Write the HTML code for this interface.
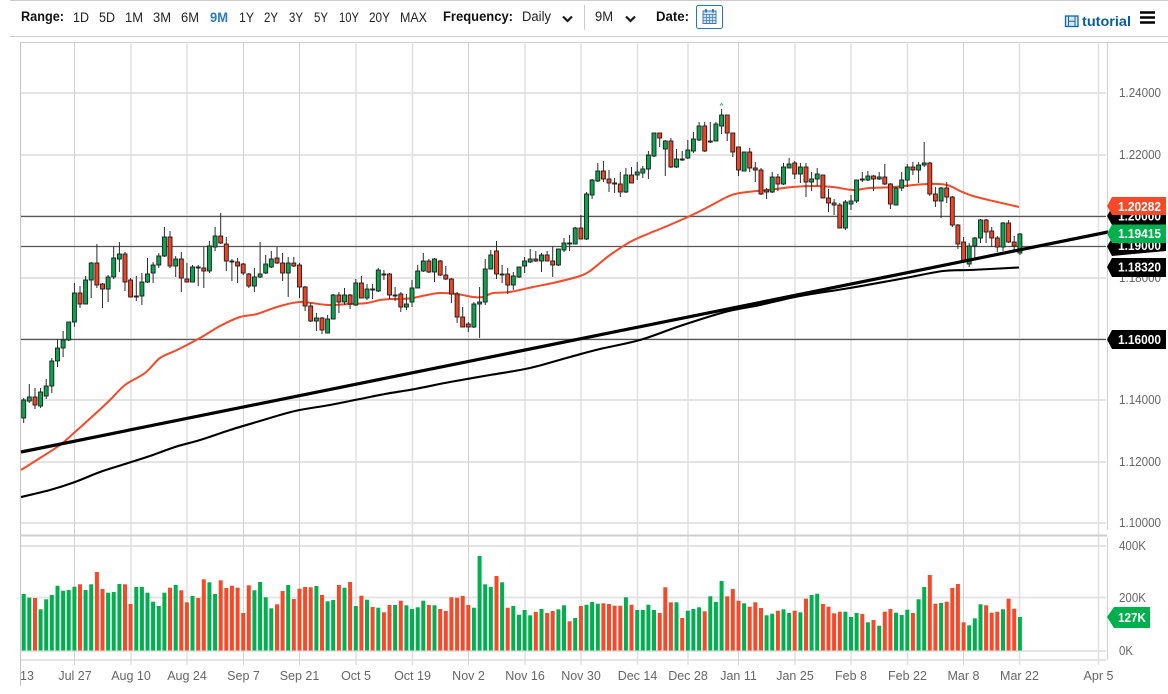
<!DOCTYPE html>
<html><head><meta charset="utf-8"><title>Chart</title>
<style>
html,body{margin:0;padding:0;background:#fff;width:1168px;height:694px;overflow:hidden}
svg{display:block}
text{font-family:"Liberation Sans",sans-serif}
.tb{font-size:13.5px;fill:#222}
.b{font-weight:bold;fill:#111}
.ax{font-size:12.5px;fill:#666}
.tag{font-size:12.5px;font-weight:bold;fill:#fff}
</style></head><body>
<svg xmlns="http://www.w3.org/2000/svg" width="1168" height="694" viewBox="0 0 1168 694">
<rect width="1168" height="694" fill="#fff"/>
<!-- toolbar -->
<path d="M10 .5H1168M10 36.5H1168M20 42.5H1168" stroke="#ccc" fill="none"/>
<text x="21" y="21" class="tb b" textLength="43" lengthAdjust="spacingAndGlyphs">Range:</text>
<text x="73" y="22" class="tb" textLength="16" lengthAdjust="spacingAndGlyphs">1D</text>
<text x="99" y="22" class="tb" textLength="16" lengthAdjust="spacingAndGlyphs">5D</text>
<text x="125" y="22" class="tb" textLength="18" lengthAdjust="spacingAndGlyphs">1M</text>
<text x="153" y="22" class="tb" textLength="18" lengthAdjust="spacingAndGlyphs">3M</text>
<text x="181" y="22" class="tb" textLength="18" lengthAdjust="spacingAndGlyphs">6M</text>
<text x="210" y="22" class="tb" style="font-weight:bold;fill:#2a7ac6" textLength="18" lengthAdjust="spacingAndGlyphs">9M</text>
<text x="239" y="22" class="tb" textLength="15" lengthAdjust="spacingAndGlyphs">1Y</text>
<text x="264" y="22" class="tb" textLength="14" lengthAdjust="spacingAndGlyphs">2Y</text>
<text x="289" y="22" class="tb" textLength="14" lengthAdjust="spacingAndGlyphs">3Y</text>
<text x="314" y="22" class="tb" textLength="14" lengthAdjust="spacingAndGlyphs">5Y</text>
<text x="339" y="22" class="tb" textLength="20" lengthAdjust="spacingAndGlyphs">10Y</text>
<text x="369" y="22" class="tb" textLength="21" lengthAdjust="spacingAndGlyphs">20Y</text>
<text x="400" y="22" class="tb" textLength="27" lengthAdjust="spacingAndGlyphs">MAX</text>
<text x="443" y="21" class="tb b" textLength="70" lengthAdjust="spacingAndGlyphs">Frequency:</text>
<text x="522" y="21" class="tb" textLength="29" lengthAdjust="spacingAndGlyphs">Daily</text>
<path d="M563 16.500l4.500 4.500 4.500-4.500M626 16.500l4.500 4.500 4.500-4.500" fill="none" stroke="#1a1a1a" stroke-width="2.200"/>
<path d="M584.500 5V30" stroke="#ccc"/>
<text x="595" y="21" class="tb" textLength="18" lengthAdjust="spacingAndGlyphs">9M</text>
<text x="656" y="21" class="tb b" textLength="33" lengthAdjust="spacingAndGlyphs">Date:</text>
<rect x="696.500" y="5.500" width="26" height="23" rx="2" fill="#fff" stroke="#1f78c1"/>
<rect x="703" y="11" width="13" height="12.500" fill="#cfe3f5" stroke="#3b7cb8"/>
<path d="M703 14.500h13M703 17.500h13M703 20.500h13M706.500 14v9.500M709.500 14v9.500M712.500 14v9.500" stroke="#3b7cb8" stroke-width=".7" fill="none"/>
<path d="M706 9v3.500M713 9v3.500" stroke="#2b5f92" stroke-width="1.500"/>
<rect x="1065.500" y="16" width="12.500" height="10.500" fill="#d8e8f6" stroke="#0a66a8" stroke-width="1.300"/>
<path d="M1068.500 16v10.500M1075 16v10.500M1068.500 21.200h6.500" stroke="#0a66a8" fill="none"/>
<text x="1082" y="26" style="font-size:14px;font-weight:bold;fill:#0b5c9c" textLength="49" lengthAdjust="spacingAndGlyphs">tutorial</text>
<path d="M1140 12.500h15M1140 17.500h15M1140 22.500h15" stroke="#000" stroke-width="2.600"/>

<!-- grid -->
<g stroke="#e4e4e4" stroke-width="2" fill="none">
<path d="M21 93H1106M21 155H1106M21 216H1106M21 278H1106M21 339H1106M21 400H1106M21 462H1106M21 523H1106"/>
<path d="M21 546H1106M21 597.500H1106M21 651H1106M21 660H1106"/>
</g>
<g stroke="#d2d2d2" fill="none">
<path d="M74.500 42V665M243.500 42V665M299.500 42V665M468.500 42V665M738.500 42V665M963.500 42V665"/>
</g>
<g stroke="#e0e0e0" stroke-width="1.500" fill="none">
<path d="M131 42V665M187 42V665M356 42V665M412.500 42V665M525 42V665M581 42V665M637.500 42V665M688 42V665M795 42V665M851 42V665M907.500 42V665M1019.500 42V665M1098.500 42V665"/>
</g>
<path d="M20.500 42V686" stroke="#c8c8c8" stroke-width="1.200"/>
<path d="M1107.500 42V530M1107.500 538V660" stroke="#d4d4d4" stroke-width="1.200"/>
<path d="M20 535.500H1107" stroke="#cfcfcf" stroke-width="2"/>

<!-- horizontal lines -->
<path d="M21 216.500H1106M21 246.500H1106M21 339.500H1106" stroke="#555" stroke-width="1.300"/>

<!-- long lines -->
<path id="ma200" fill="none" stroke="#000" stroke-width="2.100" stroke-linejoin="round"/>
<path id="ma50" fill="none" stroke="#f44a2a" stroke-width="2" stroke-linejoin="round"/>
<g id="candles"></g>
<path d="M21 452L1108 232" stroke="#000" stroke-width="3.200" fill="none"/>
<path d="M720 105.500l1.500-2 1.500 2" stroke="#19c060" fill="none"/>
<g id="vols"></g>

<!-- axis labels -->
<text x="1119" y="97" class="ax" textLength="42" lengthAdjust="spacingAndGlyphs">1.24000</text>
<text x="1119" y="159" class="ax" textLength="42" lengthAdjust="spacingAndGlyphs">1.22000</text>
<text x="1119" y="282" class="ax" textLength="42" lengthAdjust="spacingAndGlyphs">1.18000</text>
<text x="1119" y="404" class="ax" textLength="42" lengthAdjust="spacingAndGlyphs">1.14000</text>
<text x="1119" y="466" class="ax" textLength="42" lengthAdjust="spacingAndGlyphs">1.12000</text>
<text x="1119" y="527" class="ax" textLength="42" lengthAdjust="spacingAndGlyphs">1.10000</text>
<text x="1119" y="550" class="ax" textLength="27" lengthAdjust="spacingAndGlyphs">400K</text>
<text x="1119" y="602" class="ax" textLength="27" lengthAdjust="spacingAndGlyphs">200K</text>
<text x="1119" y="655" class="ax" textLength="14" lengthAdjust="spacingAndGlyphs">0K</text>

<!-- tags -->
<polygon points="1107,216 1112,207 1166,207 1166,225 1112,225" fill="#000"/>
<text x="1118" y="220.500" class="tag" textLength="43" lengthAdjust="spacingAndGlyphs">1.20000</text>
<polygon points="1107,246.500 1112,238 1166,238 1166,251 1112,256" fill="#000"/>
<text x="1118" y="250" class="tag" textLength="43" lengthAdjust="spacingAndGlyphs">1.19000</text>
<polygon points="1107,267 1112,258 1166,258 1166,277 1112,277" fill="#000"/>
<text x="1118" y="271.500" class="tag" textLength="43" lengthAdjust="spacingAndGlyphs">1.18320</text>
<polygon points="1107,339.500 1112,330 1166,330 1166,349 1112,349" fill="#000"/>
<text x="1118" y="344" class="tag" textLength="43" lengthAdjust="spacingAndGlyphs">1.16000</text>
<polygon points="1107,206 1112,197 1166,197 1166,215 1112,215" fill="#f44a2a"/>
<text x="1118" y="211" class="tag" textLength="43" lengthAdjust="spacingAndGlyphs">1.20282</text>
<polygon points="1107,233.500 1112,224.500 1166,224.500 1166,243 1112,243" fill="#00b04f"/>
<text x="1118" y="238" class="tag" textLength="43" lengthAdjust="spacingAndGlyphs">1.19415</text>
<polygon points="1107,617 1114,607 1150,607 1150,628 1114,628" fill="#00b04f"/>
<text x="1118" y="622" class="tag" textLength="28" lengthAdjust="spacingAndGlyphs">127K</text>

<!-- dates -->
<g class="ax" text-anchor="middle">
<text x="27" y="680" class="ax">13</text>
<text x="75" y="680" class="ax">Jul 27</text>
<text x="131" y="680" class="ax">Aug 10</text>
<text x="187" y="680" class="ax">Aug 24</text>
<text x="243.500" y="680" class="ax">Sep 7</text>
<text x="299.500" y="680" class="ax">Sep 21</text>
<text x="356" y="680" class="ax">Oct 5</text>
<text x="412.500" y="680" class="ax">Oct 19</text>
<text x="468.500" y="680" class="ax">Nov 2</text>
<text x="525" y="680" class="ax">Nov 16</text>
<text x="581" y="680" class="ax">Nov 30</text>
<text x="637.500" y="680" class="ax">Dec 14</text>
<text x="688" y="680" class="ax">Dec 28</text>
<text x="738.500" y="680" class="ax">Jan 11</text>
<text x="795" y="680" class="ax">Jan 25</text>
<text x="851" y="680" class="ax">Feb 8</text>
<text x="907.500" y="680" class="ax">Feb 22</text>
<text x="963.500" y="680" class="ax">Mar 8</text>
<text x="1019.500" y="680" class="ax">Mar 22</text>
<text x="1098.500" y="680" class="ax">Apr 5</text>
</g>
</svg>
<script>
var C="g400,418,398,423 g397,401,384,403 r397,405,388,409 g392,406,388,408 g386,396,379,399 g361,386,358,393 g348,361,339,367 g340,348,331,357 g322,340,322,341 g293,322,283,327 r293,304,286,308 g280,304,276,304 g263,280,262,298 r263,285,244,288 r284,289,283,308 g277,289,275,302 g258,277,246,279 g254,259,242,272 r254,282,252,291 r280,297,278,297 r296,297,276,301 g282,296,273,305 g274,282,258,283 g265,273,262,283 g256,265,253,268 g237,256,227,257 r237,266,231,268 g259,266,256,277 r259,278,252,292 r279,282,263,282 g267,282,265,282 g267,268,265,286 r268,271,247,288 g246,271,241,273 g236,247,227,251 r236,243,213,244 r244,261,237,271 r261,262,259,281 r262,266,258,283 r264,273,263,275 r274,286,273,288 g277,286,268,292 g274,277,242,278 g264,273,255,274 g259,267,251,268 r258,263,247,264 r263,273,253,281 g263,273,257,297 r263,266,257,267 r265,287,263,298 r287,306,286,311 r306,321,303,322 g318,321,313,331 r318,330,317,334 g319,333,315,333 g295,319,294,319 r295,302,292,313 g295,302,288,305 r295,304,294,309 g283,305,279,306 r283,298,276,298 g289,298,284,300 g289,290,284,299 g270,291,268,292 g274,275,270,280 r274,295,273,299 g295,296,287,301 r294,307,292,312 g304,307,294,310 g288,302,280,307 g271,288,265,288 g261,271,253,272 r261,272,259,273 g259,272,258,282 r261,275,260,276 r275,279,266,280 r279,294,278,303 r294,317,292,323 r317,327,307,327 r324,327,322,332 g304,327,302,328 g302,304,287,338 g269,302,259,305 g255,269,250,269 r251,274,241,279 g274,275,265,283 r274,285,268,294 g276,285,272,290 g267,277,267,278 g261,266,257,273 g259,262,249,263 r259,261,251,262 g255,261,253,272 r255,261,251,261 r261,265,246,277 g249,265,249,266 g243,250,238,252 g243,244,235,251 g228,244,227,244 r228,239,215,239 g194,239,192,240 g180,195,179,199 g171,181,163,182 r171,179,161,182 r179,183,170,192 r183,184,178,193 r184,192,172,197 g175,192,168,193 r175,183,167,183 g172,175,162,180 g169,173,166,178 g155,169,151,179 g133,156,133,157 r133,138,133,147 g141,149,140,176 r141,167,138,168 g159,167,149,168 g159,160,151,161 g150,158,140,159 g139,151,132,153 g126,140,122,141 r126,151,122,152 g141,142,122,143 g124,141,122,141 g115,126,109,134 r115,133,115,141 r133,152,133,157 r147,170,147,176 g152,171,152,171 r152,168,148,172 r168,170,162,182 r170,194,168,195 r190,192,188,199 g177,192,172,193 r177,184,174,191 g167,184,163,185 g164,168,158,168 r163,174,161,179 g167,174,163,183 r167,182,163,197 g179,182,172,191 g174,179,168,186 r175,198,175,198 r198,203,189,212 r203,205,199,215 r205,228,203,228 g202,228,200,230 g201,204,195,210 g180,201,180,203 g179,180,172,182 g176,180,171,181 r176,179,175,191 g177,179,172,180 r177,184,164,185 r184,204,183,209 g188,205,187,205 g180,188,172,191 g167,180,164,187 r167,170,162,175 g165,170,162,183 g163,165,142,167 r163,194,162,196 r194,201,187,207 g188,201,187,218 r188,197,182,203 r197,225,196,227 r225,244,224,249 r242,262,237,263 g246,264,243,267 g238,246,237,260 g220,238,219,243 r220,232,219,243 r231,238,227,247 r238,247,236,252 g223,247,222,251 r223,242,220,243 r242,246,236,252 g234,253,233,255".split(" ");
var V="g192 g203 r204 g238 g208 g195 g167 g182 g180 g170 r163 g180 g163 r126 r177 g188 g186 g162 r163 r222 g171 g171 g188 g215 g228 g188 r173 g165 r181 r217 g198 r204 r148 g157 g192 r151 r174 r167 r173 r249 r166 g181 g156 g202 g235 r223 r183 g165 r207 r176 r171 r172 g168 r195 g214 g210 r165 g173 r156 g228 r197 g209 r231 g233 r247 r225 g225 r212 g226 g237 g232 g212 r225 g226 r237 r243 r202 r203 r198 r225 g233 g78 g163 g171 r138 g157 r233 g228 g254 g240 g256 r246 g237 r249 r243 g238 g226 r274 g264 r228 g224 g216 g221 r220 r222 r227 r227 g202 r224 g240 g240 g224 g240 r249 r172 r217 g217 r264 g242 g237 g232 r244 g199 g216 g153 r199 r177 r212 g220 r230 r217 r234 g256 g251 r242 g238 g249 r242 g247 r206 g195 g191 r222 r230 r250 r245 g245 g261 g249 r252 g277 r270 g287 r245 r237 g248 g255 g239 r249 g208 g171 r135 r221 g219 r215 r174 r162 r277 g286 g265 g223 r226 r248 r245 g238 r206 r236 g261".split(" ");
var NS="http://www.w3.org/2000/svg";
function el(p,n,a){var e=document.createElementNS(NS,n);for(var k in a)e.setAttribute(k,a[k]);p.appendChild(e);}
var cg=document.getElementById("candles"),vg=document.getElementById("vols");
for(var i=0;i<C.length;i++){
 var s=C[i],col=s[0]=="g"?"#0aa44e":"#ee4324",d=s.slice(1).split(",").map(Number),x=23.7+5.628*i;
 el(cg,"path",{d:"M"+x.toFixed(1)+" "+d[2]+"V"+d[3],stroke:"#2b2b2b","stroke-width":"1"});
 el(cg,"rect",{x:(x-2).toFixed(1),y:d[0],width:"4",height:Math.max(d[1]-d[0],1),fill:col,stroke:"#1c1c1c","stroke-width":"0.9"});
}
for(var j=0;j<V.length;j++){
 var v=V[j],y=530+Number(v.slice(1))/3,xv=23.7+5.628*j;
 el(vg,"rect",{x:(xv-2).toFixed(1),y:y.toFixed(1),width:"4",height:(650.5-y).toFixed(1),fill:v[0]=="g"?"#00b04f":"#f44a2a"});
}
function smooth(str){
 var p=str.split(" ").map(function(t){return t.split(",").map(Number);}),o="M"+p[0][0]+" "+p[0][1];
 for(var i=0;i<p.length-1;i++){
  var a=p[Math.max(i-1,0)],b=p[i],c=p[i+1],e=p[Math.min(i+2,p.length-1)];
  o+="C"+(b[0]+(c[0]-a[0])/6).toFixed(1)+" "+(b[1]+(c[1]-a[1])/6).toFixed(1)+" "+(c[0]-(e[0]-b[0])/6).toFixed(1)+" "+(c[1]-(e[1]-b[1])/6).toFixed(1)+" "+c[0]+" "+c[1];
 }
 return o;
}
document.getElementById("ma200").setAttribute("d",smooth("21,497 50,490 75,482 100,472 125,464 150,456 175,447 200,440 230,430 260,421 295,411 330,405 360,399 385,394 415,389 450,382 490,375 530,368 570,357 600,349 640,340 680,326 725,312 760,305 800,296 850,288 900,279 943,271 970,270 1019,267.5"));
document.getElementById("ma50").setAttribute("d",smooth("21,470 40,458 60,445 75,432 95,414 110,400 125,385 145,373 160,358 177,350 200,338 220,326 240,317 257,314 277,307 300,302 328,305 350,304 367,303 380,300 390,299 400,299 413,298 427,295 440,293 457,294 473,297 483,297 493,293 510,292 533,287 553,283 580,276 590,271 600,263 610,255 630,242 650,233 660,229 690,216 710,206 727,197 740,193 767,190 793,187 813,186 833,187 853,190 870,188 893,187 927,184 947,185 960,191 973,196 993,201 1019,207"));
</script>
</body></html>
